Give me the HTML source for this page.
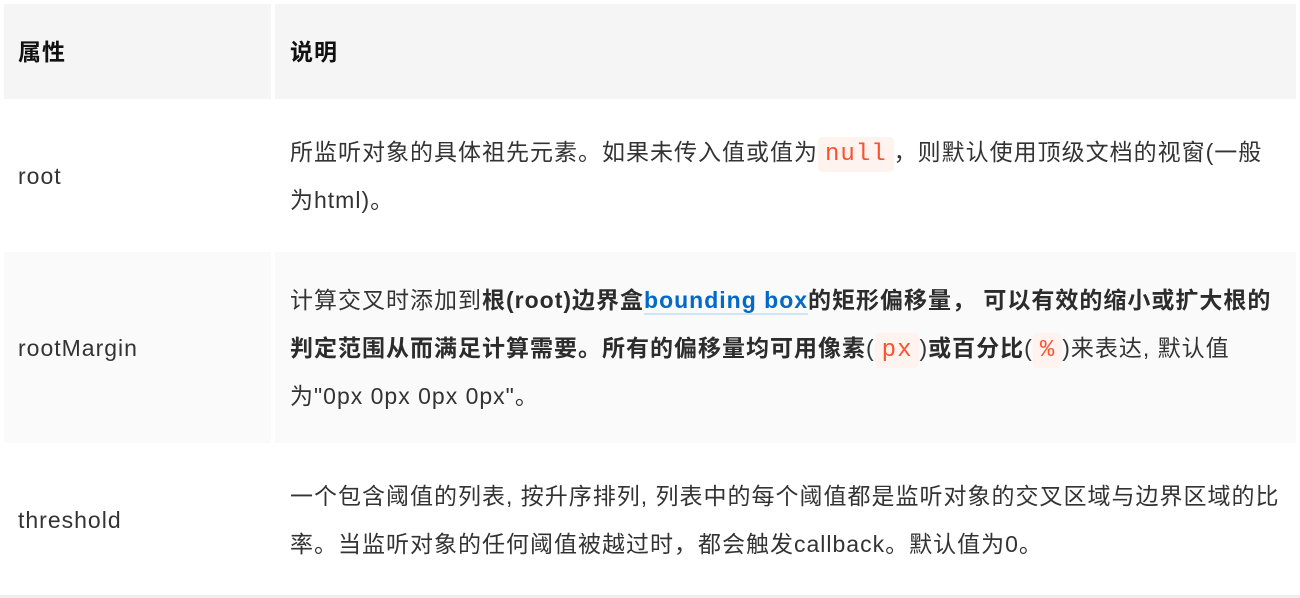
<!DOCTYPE html>
<html><head><meta charset="utf-8"><style>
html,body{margin:0;padding:0;background:#fff;width:1300px;height:598px;overflow:hidden}
body{font-family:"Liberation Sans","Noto Sans CJK SC",sans-serif;color:#333;font-size:23px;letter-spacing:1px}
.c{position:absolute}
.h{background:#f5f5f5}
.g{background:#fafafa}
.t{position:absolute;white-space:nowrap;line-height:48px}
b{font-weight:bold;color:#2c2c2c}
code{font-family:"Liberation Mono",monospace;color:#ff502c;background:#fff3f0;padding:4px 7px;border-radius:4px;font-size:24px;letter-spacing:1px}
a{color:#0269c8;text-decoration:none;border-bottom:2px solid #cde4fa;font-weight:bold}
</style></head><body>
<div class="c h" style="left:4px;top:4px;width:267px;height:95px"></div>
<div class="c h" style="left:275px;top:4px;width:1021px;height:95px"></div>
<div class="c g" style="left:4px;top:252px;width:267px;height:191px"></div>
<div class="c g" style="left:275px;top:252px;width:1021px;height:191px"></div>
<div class="c" style="left:0;top:595px;width:1300px;height:3px;background:#eee"></div>

<div class="t" style="left:18px;top:28px"><b style="color:#111">属性</b></div>
<div class="t" style="left:290px;top:28px"><b style="color:#111">说明</b></div>

<div class="t" style="left:18px;top:152px">root</div>
<div class="t" style="left:290px;top:128px">所监听对象的具体祖先元素。如果未传入值或值为<code>null</code>，则默认使用顶级文档的视窗(一般</div>
<div class="t" style="left:290px;top:176px">为html)。</div>

<div class="t" style="left:18px;top:324px">rootMargin</div>
<div class="t" style="left:290px;top:276px">计算交叉时添加到<b>根(root)边界盒</b><a>bounding box</a><b>的矩形偏移量， 可以有效的缩小或扩大根的</b></div>
<div class="t" style="left:290px;top:324px"><b>判定范围从而满足计算需要。所有的偏移量均可用像素</b>(<code>px</code>)<b>或百分比</b>(<code>%</code>)来表达, 默认值</div>
<div class="t" style="left:290px;top:372px">为"0px 0px 0px 0px"。</div>

<div class="t" style="left:18px;top:496px">threshold</div>
<div class="t" style="left:290px;top:472px">一个包含阈值的列表, 按升序排列, 列表中的每个阈值都是监听对象的交叉区域与边界区域的比</div>
<div class="t" style="left:290px;top:520px">率。当监听对象的任何阈值被越过时，都会触发callback。默认值为0。</div>
</body></html>
